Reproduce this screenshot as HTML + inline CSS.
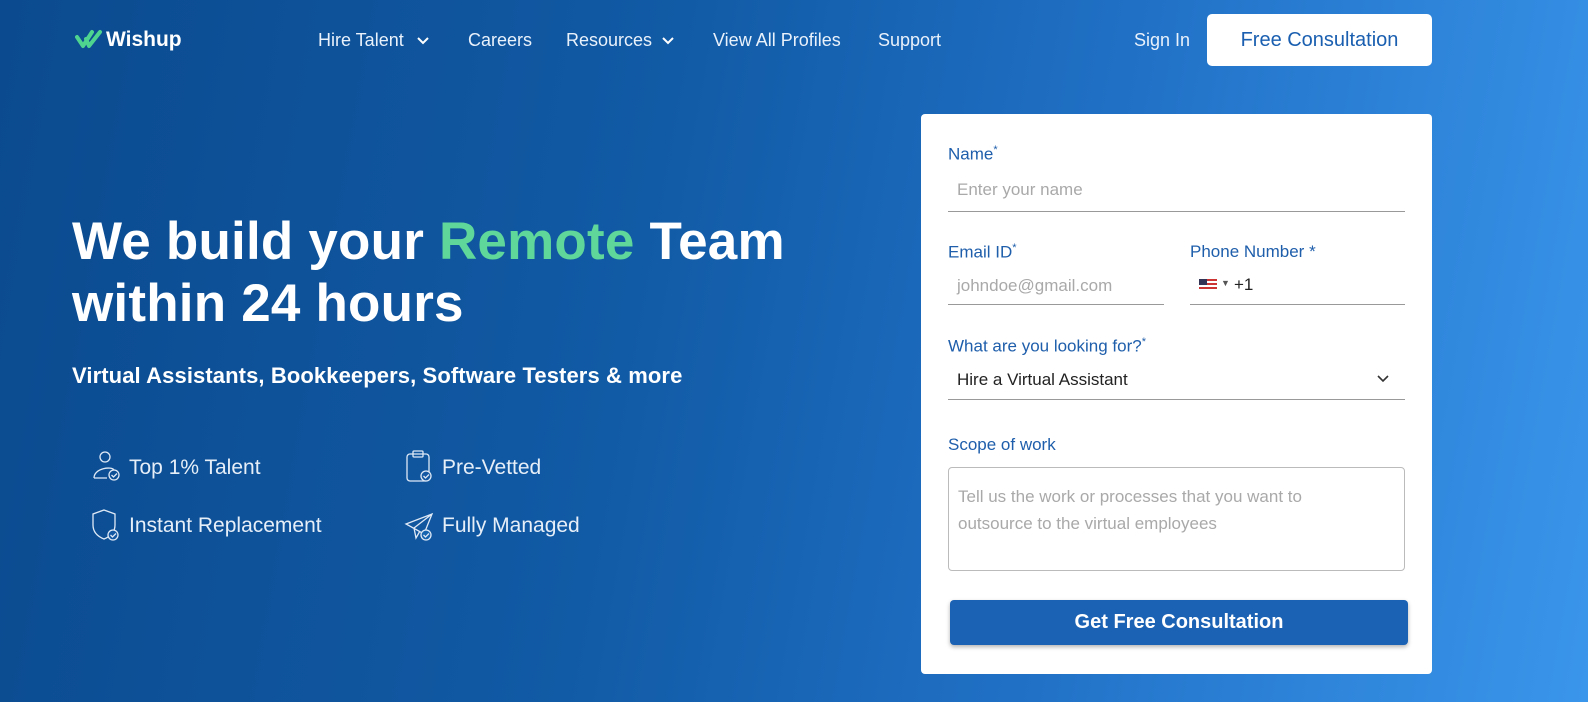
<!DOCTYPE html>
<html><head><style>
*{margin:0;padding:0;box-sizing:border-box}
body{width:1588px;height:711px;background:#fff;font-family:"Liberation Sans",Arial,sans-serif;overflow:hidden;position:relative}
.hero{position:absolute;left:0;top:0;width:1588px;height:702px;background:linear-gradient(100deg,#0b4a8e 0%,#115aa5 40%,#1f6fc4 65%,#3a96eb 100%)}
.abs{position:absolute;white-space:nowrap}
.nav{color:#e9f1fb;font-size:18px;top:30px}
.h1{left:72px;top:211px;color:#fff;font-size:53px;font-weight:bold;line-height:62px;letter-spacing:0.2px}
.card{left:921px;top:114px;width:511px;height:560px;background:#fff;border-radius:4px}
.lbl{color:#1e5eab;font-size:17px}
.ph{color:#a9a9a9;font-size:17px}
.line{position:absolute;height:1px;background:#999}
.feat{color:#e6eef8;font-size:21px}
</style></head><body>
<div class="hero"></div>
<svg class="abs" style="left:75px;top:29px" width="28" height="20" viewBox="0 0 28 20"><path d="M2 8 L8 17 L17 3 M11 10 L14 17 L25 3" stroke="#4fd48f" stroke-width="4" fill="none" stroke-linecap="round" stroke-linejoin="round"/></svg>
<div class="abs" style="left:106px;top:28px;color:#fff;font-size:21px;font-weight:bold">Wishup</div>
<div class="abs nav" style="left:318px">Hire Talent</div>
<svg class="abs" style="left:416px;top:36px" width="14" height="10"><path d="M2 2 L7 7 L12 2" stroke="#fff" stroke-width="2" fill="none"/></svg>
<div class="abs nav" style="left:468px">Careers</div>
<div class="abs nav" style="left:566px">Resources</div>
<svg class="abs" style="left:661px;top:36px" width="14" height="10"><path d="M2 2 L7 7 L12 2" stroke="#fff" stroke-width="2" fill="none"/></svg>
<div class="abs nav" style="left:713px">View All Profiles</div>
<div class="abs nav" style="left:878px">Support</div>
<div class="abs nav" style="left:1134px">Sign In</div>
<div class="abs" style="left:1207px;top:14px;width:225px;height:52px;background:#fff;border-radius:5px;color:#1a5fb0;font-size:20px;text-align:center;line-height:52px">Free Consultation</div>
<div class="abs h1">We build your <span style="color:#5fd69a">Remote</span> Team<br>within 24 hours</div>
<div class="abs" style="left:72px;top:363px;color:#fff;font-size:22px;font-weight:bold;letter-spacing:0.1px">Virtual Assistants, Bookkeepers, Software Testers &amp; more</div>
<svg class="abs" style="left:92px;top:450px" width="30" height="32" viewBox="0 0 30 32" fill="none" stroke="#dfe9f6" stroke-width="1.3"><circle cx="13" cy="7" r="5"/><path d="M2 28 C2 18 20 16 22 20 M2 28 H15"/><circle cx="22" cy="25" r="5"/><path d="M19.5 25 l2 2 l3.5-3.5"/></svg>
<div class="abs feat" style="left:129px;top:456px">Top 1% Talent</div>
<svg class="abs" style="left:405px;top:449px" width="30" height="34" viewBox="0 0 30 34" fill="none" stroke="#dfe9f6" stroke-width="1.3"><rect x="2" y="5" width="22" height="27" rx="3"/><rect x="8" y="2" width="10" height="6" rx="1"/><circle cx="21" cy="27" r="5" fill="#1458a3"/><path d="M18.5 27 l2 2 l3.5-3.5"/></svg>
<div class="abs feat" style="left:442px;top:456px">Pre-Vetted</div>
<svg class="abs" style="left:91px;top:508px" width="30" height="34" viewBox="0 0 30 34" fill="none" stroke="#dfe9f6" stroke-width="1.3"><path d="M13 2 L24 6 V17 C24 25 18 29 13 31 C8 29 2 25 2 17 V6 Z"/><circle cx="22" cy="27" r="5" fill="#1458a3"/><path d="M19.5 27 l2 2 l3.5-3.5"/></svg>
<div class="abs feat" style="left:129px;top:514px">Instant Replacement</div>
<svg class="abs" style="left:404px;top:512px" width="32" height="30" viewBox="0 0 32 30" fill="none" stroke="#dfe9f6" stroke-width="1.3"><path d="M2 12 L28 2 L20 22 Z M28 2 L10 16 L12 26 L16 19"/><circle cx="22" cy="23" r="5" fill="#1663b0"/><path d="M19.5 23 l2 2 l3.5-3.5"/></svg>
<div class="abs feat" style="left:442px;top:514px">Fully Managed</div>
<div class="abs card"></div>
<div class="abs lbl" style="left:948px;top:144px">Name<sup style="font-size:11px">*</sup></div>
<div class="abs ph" style="left:957px;top:180px">Enter your name</div>
<div class="line" style="left:948px;top:211px;width:457px"></div>
<div class="abs lbl" style="left:948px;top:242px">Email ID<sup style="font-size:11px">*</sup></div>
<div class="abs ph" style="left:957px;top:276px">johndoe@gmail.com</div>
<div class="line" style="left:948px;top:304px;width:216px"></div>
<div class="abs lbl" style="left:1190px;top:242px">Phone Number *</div>
<div class="abs" style="left:1199px;top:279px;width:18px;height:12px;background:repeating-linear-gradient(#c33 0 2px,#fff 2px 4px)"><div style="width:8px;height:6px;background:#335"></div></div>
<div class="abs" style="left:1221px;top:278px;font-size:9px;color:#555">▼</div>
<div class="abs" style="left:1234px;top:275px;font-size:17px;color:#222">+1</div>
<div class="line" style="left:1190px;top:304px;width:215px"></div>
<div class="abs lbl" style="left:948px;top:336px">What are you looking for?<sup style="font-size:11px">*</sup></div>
<div class="abs" style="left:957px;top:370px;font-size:17px;color:#222">Hire a Virtual Assistant</div>
<svg class="abs" style="left:1376px;top:374px" width="14" height="10"><path d="M2 2 L7 7 L12 2" stroke="#333" stroke-width="1.6" fill="none"/></svg>
<div class="line" style="left:948px;top:399px;width:457px"></div>
<div class="abs lbl" style="left:948px;top:435px">Scope of work</div>
<div class="abs" style="left:948px;top:467px;width:457px;height:104px;border:1px solid #bbb;border-radius:4px"></div>
<div class="abs ph" style="left:958px;top:483px;line-height:27px">Tell us the work or processes that you want to<br>outsource to the virtual employees</div>
<div class="abs" style="left:950px;top:600px;width:458px;height:45px;background:#1b62b4;border-radius:4px;color:#fff;font-size:20px;font-weight:bold;text-align:center;line-height:45px;box-shadow:0 2px 4px rgba(0,0,0,.3)">Get Free Consultation</div>
</body></html>
